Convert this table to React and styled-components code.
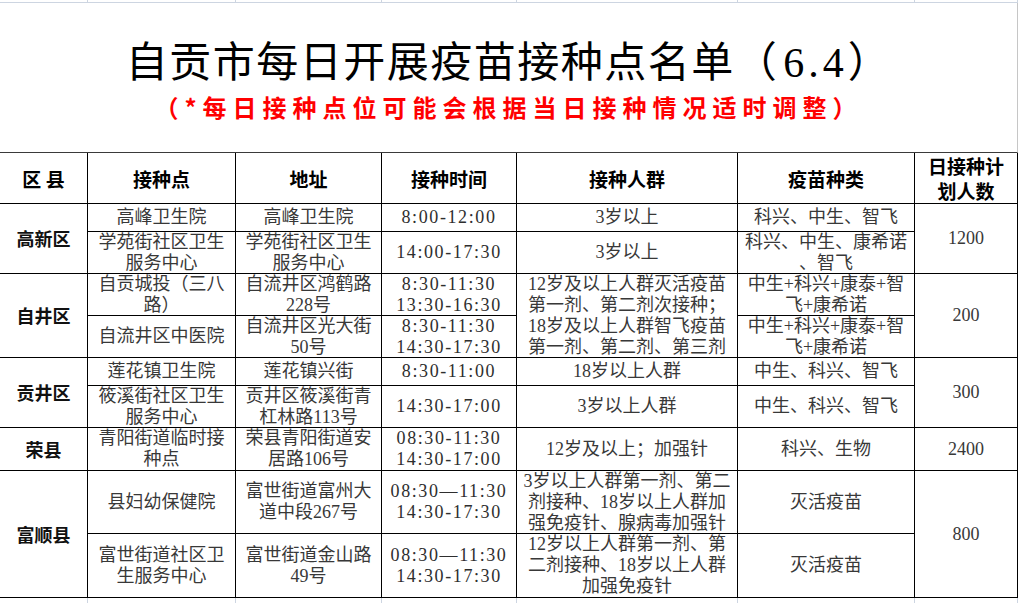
import styled, { createGlobalStyle } from 'styled-components';

const COLS = '88px 148px 146px 135px 221px 177px 103px';
const ROWS = '51px 28px 42px 42px 42px 28px 42px 43px 63px 64px';

const GlobalStyle = createGlobalStyle`
  html, body {
    margin: 0;
    padding: 0;
    background: #fff;
    overflow: hidden;
  }
  body {
    font-family: "Liberation Serif", "Noto Sans CJK SC", serif;
  }
`;

const Sheet = styled.div`
  width: 1018px;
`;

const Strip = styled.div`
  display: grid;
  grid-template-columns: ${COLS};
  height: ${p => p.$h}px;
  box-sizing: border-box;
  border-bottom: ${p => (p.$top ? '1px solid #cdd5e1' : 'none')};
`;

const StripCell = styled.div`
  border-right: 1px solid #cdd5e1;
`;

const TitleBox = styled.div`
  height: 150px;
  box-sizing: border-box;
  border-right: 1px solid #c6c6c6;
  border-bottom: 1px solid #3a3a3a;
  display: flex;
  flex-direction: column;
  align-items: center;
  padding-top: 36px;
`;

const Title = styled.div`
  font-family: "Liberation Serif", "Noto Sans CJK SC", serif;
  font-size: 42px;
  line-height: 48px;
  letter-spacing: 1.5px;
  color: #000;
`;

const TitleNum = styled.span`
  letter-spacing: 4px;
  margin-left: 5px;
`;

const Subtitle = styled.div`
  font-family: "Noto Sans CJK SC", sans-serif;
  font-size: 24px;
  line-height: 40px;
  font-weight: 700;
  letter-spacing: 6px;
  color: #ff0000;
`;

const Table = styled.div`
  display: grid;
  grid-template-columns: ${COLS};
  grid-template-rows: ${ROWS};
`;

const Cell = styled.div`
  grid-row: span ${p => p.$rows || 1};
  box-sizing: border-box;
  border-right: 1px solid #000;
  border-bottom: 1px solid #000;
  display: flex;
  flex-direction: column;
  align-items: center;
  justify-content: center;
  text-align: center;
  white-space: nowrap;
  overflow: hidden;
  font-size: 18px;
  line-height: 21px;
  color: #383838;
`;

const HeadCell = styled(Cell)`
  font-family: "Noto Sans CJK SC", sans-serif;
  font-weight: 700;
  font-size: 19px;
  line-height: 25px;
  color: #000;
`;

const RegionCell = styled(Cell)`
  font-family: "Noto Sans CJK SC", sans-serif;
  font-weight: 700;
  font-size: 18px;
  color: #111;
`;

const TimeCell = styled(Cell)`
  font-family: "Liberation Serif", "Noto Sans CJK SC", serif;
  font-size: 18px;
  letter-spacing: 1.6px;
  color: #2e2e2e;
`;

const Line = styled.span`
  display: block;
`;

const Lines = ({ items }) => items.map((t, i) => <Line key={i}>{t}</Line>);

const HEAD = ['区 县', '接种点', '地址', '接种时间', '接种人群', '疫苗种类', ['日接种计', '划人数']];

const DATA = [
  {
    region: '高新区', regionRows: 2,
    site: ['高峰卫生院'], addr: ['高峰卫生院'], time: ['8:00-12:00'],
    crowd: ['3岁以上'], vaccine: ['科兴、中生、智飞'], plan: '1200', planRows: 2,
  },
  {
    site: ['学苑街社区卫生', '服务中心'], addr: ['学苑街社区卫生', '服务中心'], time: ['14:00-17:30'],
    crowd: ['3岁以上'], vaccine: ['科兴、中生、康希诺', '、智飞'],
  },
  {
    region: '自井区', regionRows: 2,
    site: ['自贡城投（三八', '路）'], addr: ['自流井区鸿鹤路', '228号'], time: ['8:30-11:30', '13:30-16:30'],
    crowd: ['12岁及以上人群灭活疫苗', '第一剂、第二剂次接种；', '18岁及以上人群智飞疫苗', '第一剂、第二剂、第三剂'], crowdRows: 2,
    vaccine: ['中生+科兴+康泰+智', '飞+康希诺'], plan: '200', planRows: 2,
  },
  {
    site: ['自流井区中医院'], addr: ['自流井区光大街', '50号'], time: ['8:30-11:30', '14:30-17:30'],
    vaccine: ['中生+科兴+康泰+智', '飞+康希诺'],
  },
  {
    region: '贡井区', regionRows: 2,
    site: ['莲花镇卫生院'], addr: ['莲花镇兴街'], time: ['8:30-11:00'],
    crowd: ['18岁以上人群'], vaccine: ['中生、科兴、智飞'], plan: '300', planRows: 2,
  },
  {
    site: ['筱溪街社区卫生', '服务中心'], addr: ['贡井区筱溪街青', '杠林路113号'], time: ['14:30-17:00'],
    crowd: ['3岁以上人群'], vaccine: ['中生、科兴、智飞'],
  },
  {
    region: '荣县', regionRows: 1,
    site: ['青阳街道临时接', '种点'], addr: ['荣县青阳街道安', '居路106号'], time: ['08:30-11:30', '14:30-17:00'],
    crowd: ['12岁及以上；加强针'], vaccine: ['科兴、生物'], plan: '2400', planRows: 1,
  },
  {
    region: '富顺县', regionRows: 2,
    site: ['县妇幼保健院'], addr: ['富世街道富州大', '道中段267号'], time: ['08:30—11:30', '14:30-17:30'],
    crowd: ['3岁以上人群第一剂、第二', '剂接种、18岁以上人群加', '强免疫针、腺病毒加强针'],
    vaccine: ['灭活疫苗'], plan: '800', planRows: 2,
  },
  {
    site: ['富世街道社区卫', '生服务中心'], addr: ['富世街道金山路', '49号'], time: ['08:30—11:30', '14:30-17:30'],
    crowd: ['12岁以上人群第一剂、第', '二剂接种、18岁以上人群', '加强免疫针'],
    vaccine: ['灭活疫苗'],
  },
];

const GridStrip = ({ h, top }) => (
  <Strip $h={h} $top={top}>
    {Array.from({ length: 7 }).map((_, i) => <StripCell key={i} />)}
  </Strip>
);

export default function App() {
  return (
    <>
      <GlobalStyle />
      <Sheet>
        <GridStrip h={3} top />
        <TitleBox>
          <Title>自贡市每日开展疫苗接种点名单（<TitleNum>6.4</TitleNum>）</Title>
          <Subtitle>（*每日接种点位可能会根据当日接种情况适时调整）</Subtitle>
        </TitleBox>
        <Table>
          {HEAD.map((h, i) => (
            <HeadCell key={i}>{Array.isArray(h) ? <Lines items={h} /> : h}</HeadCell>
          ))}
          {DATA.flatMap((r, i) => [
            r.region && <RegionCell key={`r${i}`} $rows={r.regionRows}>{r.region}</RegionCell>,
            <Cell key={`s${i}`}><Lines items={r.site} /></Cell>,
            <Cell key={`a${i}`}><Lines items={r.addr} /></Cell>,
            <TimeCell key={`t${i}`}><Lines items={r.time} /></TimeCell>,
            r.crowd && <Cell key={`c${i}`} $rows={r.crowdRows}><Lines items={r.crowd} /></Cell>,
            <Cell key={`v${i}`}><Lines items={r.vaccine} /></Cell>,
            r.plan && <Cell key={`p${i}`} $rows={r.planRows}>{r.plan}</Cell>,
          ].filter(Boolean))}
        </Table>
        <GridStrip h={5} />
      </Sheet>
    </>
  );
}
